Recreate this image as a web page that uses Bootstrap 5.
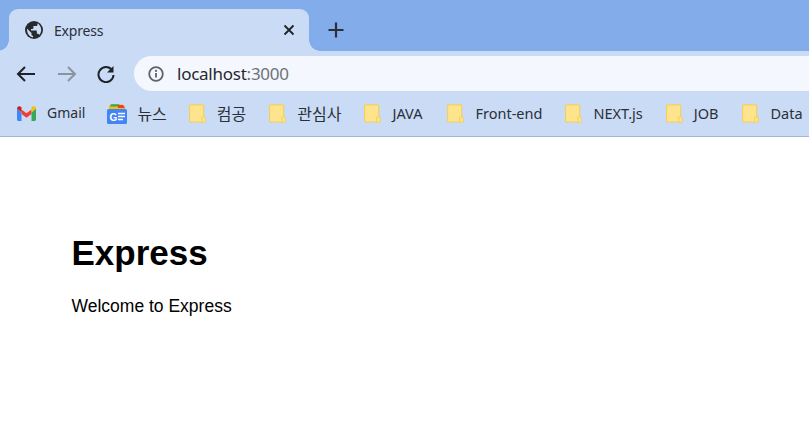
<!DOCTYPE html>
<html lang="ko">
<head>
  <meta charset="UTF-8">
  <title>Express</title>
  <link href="https://cdn.jsdelivr.net/npm/bootstrap@5.3.0/dist/css/bootstrap.min.css" rel="stylesheet">
  <style>
    html, body { height: 100%; overflow: hidden; background: #fff; }
    .tab-strip { height: 51px; background: #83ACEA; padding: 9px 0 0 9px; }
    .tab-item { position: relative; width: 300px; height: 42px; background: #CADBF6; border-radius: 9px 9px 0 0; padding: 0 14px 0 16px; color: #2b3036; }
    .tab-item::before, .tab-item::after { content: ""; position: absolute; bottom: 0; width: 11px; height: 11px; }
    .tab-item::before { left: -11px; background: radial-gradient(circle at 0 0, #83ACEA 10.5px, #CADBF6 11px); }
    .tab-item::after { right: -11px; background: radial-gradient(circle at 100% 0, #83ACEA 10.5px, #CADBF6 11px); }
    .tab-title { font: 14px "Noto Sans", sans-serif; letter-spacing: -.2px; margin-left: 11px; }
    .tab-close { margin-left: auto; }
    .tab-new { margin-left: 19px; }
    .tool-row { height: 45px; background: #CADBF6; padding: 5px 0 5px 14px; }
    .tool-btn { width: 24px; }
    .tool-gap { margin-right: 16px; }
    .addr-pill { flex: 1; height: 35px; background: #F4F7FD; border-radius: 18px 0 0 18px; padding-left: 14px; font: 17px "Noto Sans", sans-serif; letter-spacing: -.25px; }
    .addr-host { color: #26292e; margin-left: 13px; }
    .addr-port { color: #6d7278; }
    .mark-row { height: 41px; background: #CADBF6; border-bottom: 1px solid #a5b6d0; padding: 0 0 5px 17px; font: 14.5px "Noto Sans", "Noto Sans CJK KR", sans-serif; color: #2b3036; white-space: nowrap; }
    .mark-item { margin-right: 23px; }
    .mark-item span { margin: 0 0 2px 11px; }
    .mark-item .mark-ko { font-size: 16px; }
    .mark-item .mark-tight { margin-left: 10px; }
    .mark-item .mark-gmail { font-size: 14px; }
    .mark-snug { margin-right: 22px; }
    .mark-wide { margin-right: 24px; }
    .mark-wider { margin-right: 25px; }
    .page-body { padding: 95px 0 0 71.5px; font-family: "Liberation Sans", Arial, sans-serif; color: #000; }
    .page-body h1 { font-size: 35px; font-weight: 700; line-height: 1.2; margin: 0 0 22px; }
    .page-body p { font-size: 17.5px; line-height: 1.2; margin: 0; }
  </style>
</head>
<body>
  <svg width="0" height="0" class="d-block">
    <symbol id="folder" viewBox="0 0 17 19">
      <path d="M1.500 .8h11.700a1.500 1.500 0 0 1 1.500 1.500V18H1.800A1.200 1.200 0 0 1 .6 16.800V1.500z" fill="#FEE48D" stroke="#F2D064" stroke-width="1.200"/>
      <rect x="12.600" y="13" width="3.600" height="5.200" rx="1" fill="#FEE48D" stroke="#F2D064" stroke-width="1.100"/>
    </symbol>
  </svg>

  <div class="tab-strip d-flex align-items-center">
    <div class="tab-item d-flex align-items-center">
      <svg width="18" height="18" viewBox="0 0 18 18">
        <circle cx="9" cy="9" r="9" fill="#26292e"/>
        <path d="M2 7.500l4.500 4.500v1.200c0 .9.700 1.600 1.500 1.600v1.600C4.600 16 1.800 12.600 2 7.500zM12.500 2.300v1.200c0 .9-.7 1.600-1.600 1.600H8.400V7c0 .5-.4.9-.9.9H6v1.700h5c.5 0 .9.4.9.9v2.300h.8c.7 0 1.300.5 1.500 1.100 1.400-1.400 2.100-3.300 2-5.100-.2-2.600-1.400-5-3.700-6.500z" fill="#CADBF6"/>
      </svg>
      <span class="tab-title">Express</span>
      <svg class="tab-close" width="12" height="12" viewBox="0 0 12 12"><path d="M1.500 1.500l9 9M10.500 1.500l-9 9" stroke="#1f2226" stroke-width="1.800"/></svg>
    </div>
    <svg class="tab-new" width="16" height="16" viewBox="0 0 16 16"><path d="M8 .5v15M.5 8h15" stroke="#2b3036" stroke-width="2.200"/></svg>
  </div>

  <div class="tool-row d-flex align-items-center">
    <svg class="tool-btn tool-gap" width="24" height="18" viewBox="0 0 24 18"><path d="M21 9H5M11 2L4 9l7 7" fill="none" stroke="#1f2226" stroke-width="2"/></svg>
    <svg class="tool-btn tool-gap" width="24" height="18" viewBox="0 0 24 18"><path d="M4 9h16M14 2l7 7-7 7" fill="none" stroke="#8a939f" stroke-width="2"/></svg>
    <svg class="tool-btn tool-gap" width="24" height="18" viewBox="0 0 24 18"><path d="M18 5.100A7.500 7.500 0 1 0 19.500 10" fill="none" stroke="#1f2226" stroke-width="2"/><path d="M19.500 1v6.500H13z" fill="#1f2226"/></svg>
    <div class="addr-pill d-flex align-items-center">
      <svg width="16" height="16" viewBox="0 0 16 16"><circle cx="8" cy="8" r="6.800" fill="none" stroke="#5f6368" stroke-width="1.800"/><path d="M8 7v4.500" stroke="#5f6368" stroke-width="1.800"/><circle cx="8" cy="4.900" r="1.100" fill="#5f6368"/></svg>
      <span class="addr-host">localhost</span><span class="addr-port">:3000</span>
    </div>
  </div>

  <div class="mark-row d-flex align-items-center">
    <div class="mark-item mark-snug d-flex align-items-center">
      <svg width="19" height="15" viewBox="0 0 19 15">
        <path d="M0 2.500V13.500c0 .8.600 1.400 1.400 1.400H4.500V6.500z" fill="#4285F4"/>
        <path d="M14.500 6.500v8.400h3.100c.8 0 1.400-.6 1.400-1.400V2.500z" fill="#34A853"/>
        <path d="M4.500 8V3.500l5 3.700 5-3.700V8l-5 3.700z" fill="#EA4335"/>
        <path d="M0 2.500c0-1.900 2.200-3 3.700-1.800L4.500 1.300v5z" fill="#C5221F"/>
        <path d="M14.500 1.300l.8-.6C16.800-.5 19 .6 19 2.500l-4.500 3.800z" fill="#FBBC04"/>
      </svg>
      <span class="mark-gmail">Gmail</span>
    </div>
    <div class="mark-item mark-snug d-flex align-items-center">
      <svg width="20" height="20" viewBox="0 0 20 20">
        <path d="M2 3l1-2.500h13L18 3v4H2z" fill="#F9BC15"/>
        <path d="M3 2.500L4 .3h8l1 2.200z" fill="#34A853"/>
        <path d="M11 1h5l2 3h-7z" fill="#EA4335"/>
        <rect y="5" width="20" height="15" rx="1.500" fill="#4285F4"/>
        <text x="2.500" y="16.500" font-family="Liberation Sans" font-weight="700" font-size="10" fill="#fff">G</text>
        <path d="M11 9.500h7M11 12.500h7M11 15.500h5" stroke="#fff" stroke-width="1.500"/>
      </svg>
      <span class="mark-ko mark-tight">뉴스</span>
    </div>
    <div class="mark-item d-flex align-items-center"><svg width="17" height="19"><use href="#folder"/></svg><span class="mark-ko">컴공</span></div>
    <div class="mark-item d-flex align-items-center"><svg width="17" height="19"><use href="#folder"/></svg><span class="mark-ko">관심사</span></div>
    <div class="mark-item mark-wider d-flex align-items-center"><svg width="17" height="19"><use href="#folder"/></svg><span>JAVA</span></div>
    <div class="mark-item d-flex align-items-center"><svg width="17" height="19"><use href="#folder"/></svg><span>Front-end</span></div>
    <div class="mark-item d-flex align-items-center"><svg width="17" height="19"><use href="#folder"/></svg><span>NEXT.js</span></div>
    <div class="mark-item mark-wide d-flex align-items-center"><svg width="17" height="19"><use href="#folder"/></svg><span>JOB</span></div>
    <div class="mark-item d-flex align-items-center"><svg width="17" height="19"><use href="#folder"/></svg><span>Data</span></div>
  </div>

  <div class="page-body">
    <h1>Express</h1>
    <p>Welcome to Express</p>
  </div>

  <script src="https://cdn.jsdelivr.net/npm/bootstrap@5.3.0/dist/js/bootstrap.bundle.min.js"></script>
</body>
</html>
